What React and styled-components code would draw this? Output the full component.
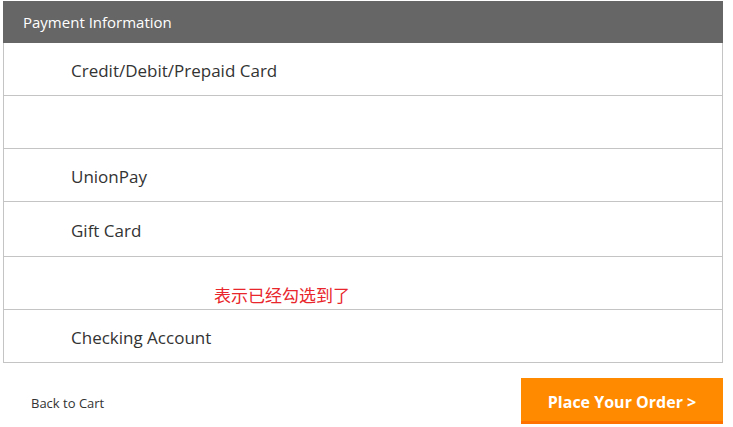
import React from 'react';
import styled, { createGlobalStyle } from 'styled-components';

const GlobalStyle = createGlobalStyle`
  body {
    margin: 0;
    background: #fff;
    font-family: "Open Sans", "Noto Sans", Arial, sans-serif;
  }
`;

const Page = styled.div`
  width: 720px;
  padding: 1px 0 0 3px;
`;

const Panel = styled.div`
  border-left: 1px solid #c4c4c4;
  border-right: 1px solid #c4c4c4;
`;

const Header = styled.div`
  height: 42px;
  margin: 0 -1px;
  background: #666666;
  color: #fff;
  font-size: 15px;
  display: flex;
  align-items: center;
  padding-left: 20px;
`;

const Row = styled.div`
  height: ${(p) => p.$h || 53}px;
  display: flex;
  align-items: center;
  padding: 3px 0 0 67px;
  box-sizing: border-box;
  border-bottom: 1px solid #c4c4c4;
  font-size: 17px;
  color: #333;
`;

const Note = styled.span`
  font-family: "Noto Sans CJK SC", sans-serif;
  font-size: 17px;
  color: #e8262b;
  padding: 20px 0 0 143px;
`;

const Footer = styled.div`
  display: flex;
  justify-content: space-between;
  align-items: center;
  margin-top: 15px;
`;

const BackLink = styled.a`
  font-size: 13px;
  color: #333;
  text-decoration: none;
  padding-left: 28px;
  margin-top: 3px;
`;

const OrderButton = styled.button`
  width: 202px;
  height: 46px;
  background: #ff8a00;
  border: none;
  border-bottom: 3px solid #ff7200;
  color: #fff;
  font-family: "Open Sans", "Noto Sans", Arial, sans-serif;
  font-weight: 700;
  font-size: 16px;
  padding: 5px 0 0;
  cursor: pointer;
`;

const methods = [
  { label: 'Credit/Debit/Prepaid Card' },
  { label: '' },
  { label: 'UnionPay' },
  { label: 'Gift Card', h: 55 },
  { label: '', note: '表示已经勾选到了' },
  { label: 'Checking Account' },
];

export default function App() {
  return (
    <>
      <GlobalStyle />
      <Page>
        <Panel>
          <Header>Payment Information</Header>
          {methods.map((m, i) => (
            <Row key={i} $h={m.h}>
              {m.label}
              {m.note && <Note>{m.note}</Note>}
            </Row>
          ))}
        </Panel>
        <Footer>
          <BackLink href="#">Back to Cart</BackLink>
          <OrderButton>Place Your Order &gt;</OrderButton>
        </Footer>
      </Page>
    </>
  );
}
